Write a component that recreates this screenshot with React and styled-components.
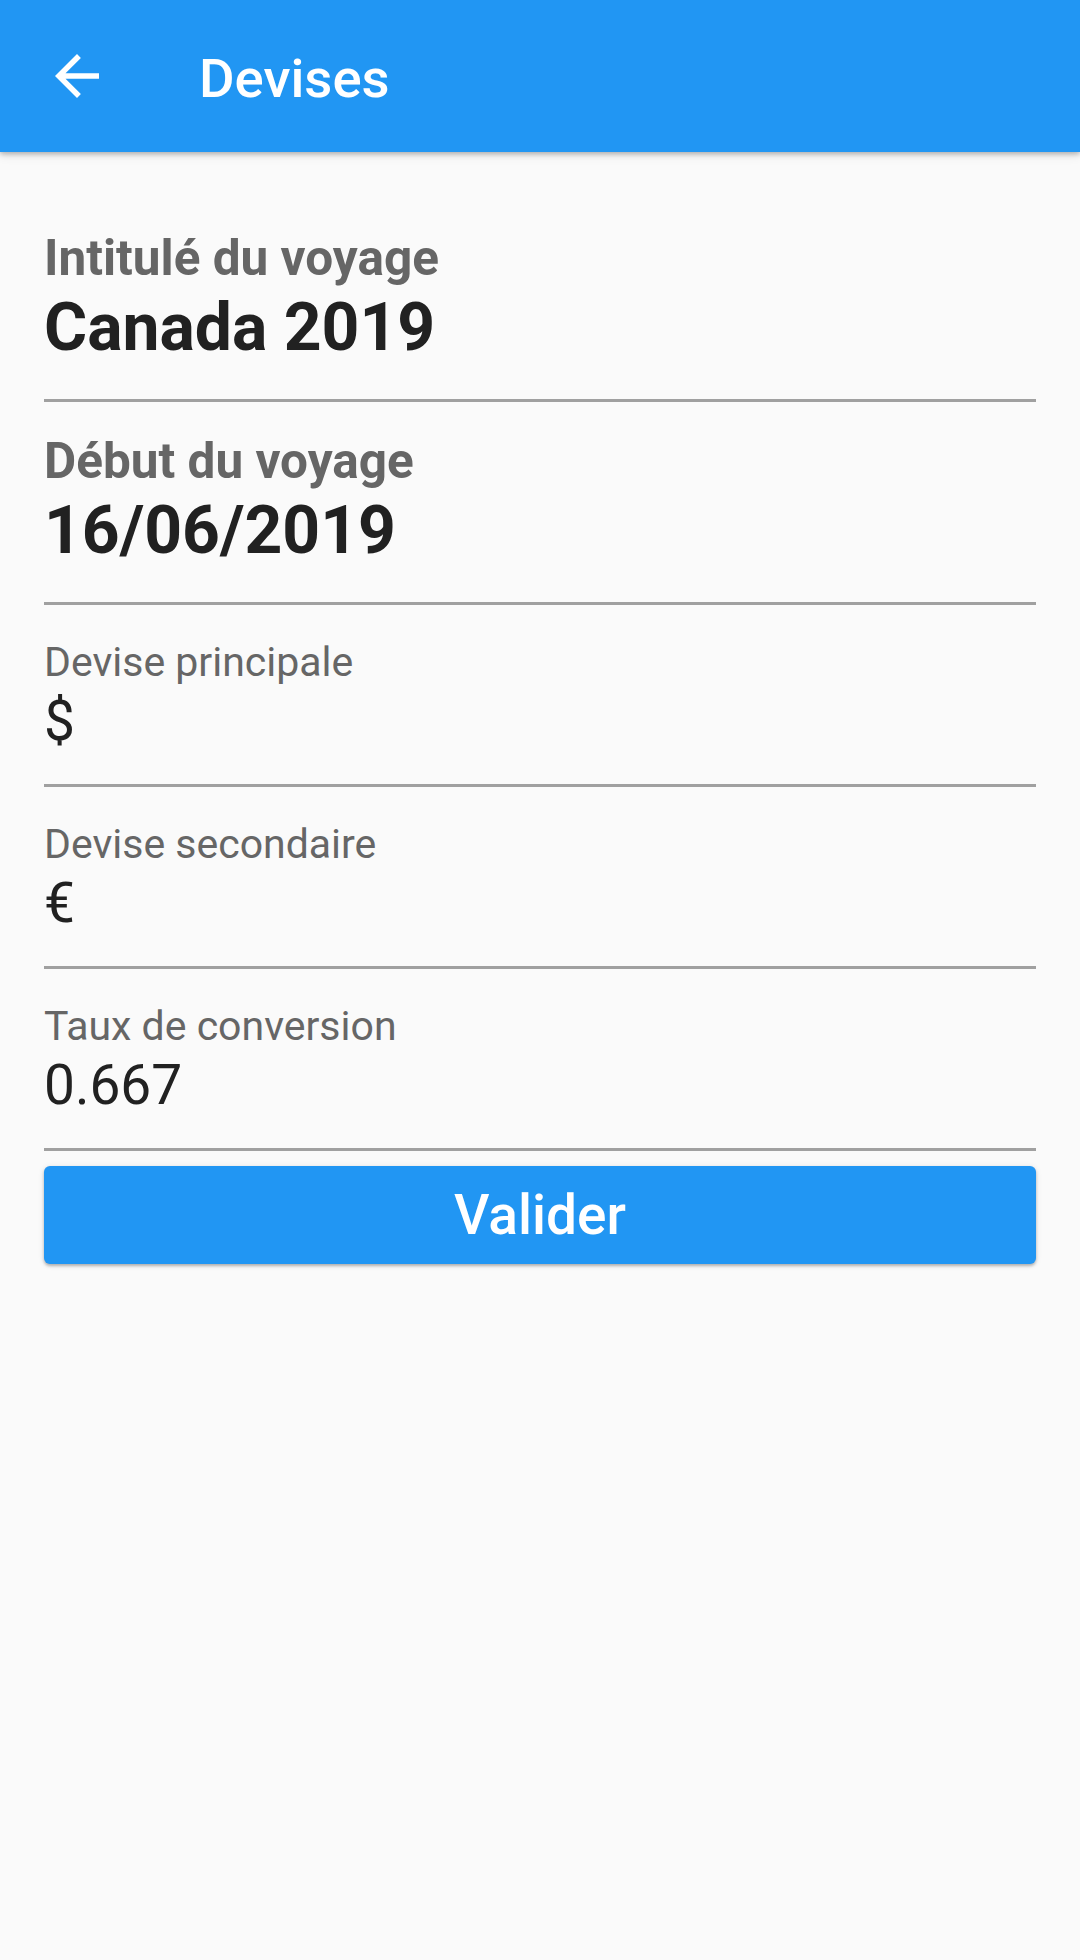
import React from "react";
import styled, { createGlobalStyle } from "styled-components";

const Global = createGlobalStyle`
  html, body { margin: 0; padding: 0; background: #fafafa; }
  body { font-family: Roboto, "Noto Sans", "Liberation Sans", sans-serif; }
  * { box-sizing: border-box; }
`;

const Page = styled.div`
  min-height: 1960px;
  background: #fafafa;
`;

const AppBar = styled.header`
  display: flex;
  align-items: center;
  height: 152px;
  background: #2196f3;
  box-shadow: 0 2px 5px rgba(0, 0, 0, 0.26), 0 4px 10px rgba(0, 0, 0, 0.08);
  position: relative;
  z-index: 1;
`;

const BackButton = styled.button`
  display: flex;
  align-items: center;
  justify-content: center;
  width: 66px;
  height: 66px;
  margin-left: 44px;
  padding: 0;
  border: none;
  background: transparent;
  color: #fff;
`;

const Title = styled.h1`
  margin: 4px 0 0 89px;
  font-size: 54.5px;
  font-weight: 500;
  color: #fff;
  line-height: 1;
`;

const Content = styled.main`
  display: flex;
  flex-direction: column;
  padding: 47px 44px 0 44px;
`;

const Field = styled.div`
  display: flex;
  flex-direction: column;
  padding: ${(p) => (p.$strong ? "30px 0 31px" : "32px 0 29px")};
  border-bottom: 3px solid #a0a0a0;
`;

const Label = styled.div`
  font-size: ${(p) => (p.$strong ? "49.5px" : "41px")};
  line-height: ${(p) => (p.$strong ? "58px" : "51px")};
  font-weight: ${(p) => (p.$strong ? 700 : 400)};
  color: #666666;
`;

const Value = styled.div`
  font-size: ${(p) => (p.$strong ? "66px" : "55px")};
  line-height: ${(p) => (p.$strong ? "80px" : "67px")};
  font-weight: ${(p) => (p.$strong ? 700 : 400)};
  color: #212121;
  margin-top: ${(p) => (p.$strong ? "1px" : "0")};
`;

const SubmitButton = styled.button`
  margin-top: 15px;
  height: 98px;
  border: none;
  border-radius: 6px;
  background: #2196f3;
  color: #fff;
  font-family: inherit;
  font-size: 55px;
  font-weight: 500;
  box-shadow: 0 2px 3px rgba(0, 0, 0, 0.25), 0 1px 6px rgba(0, 0, 0, 0.1);
`;

const ArrowBack = () => (
  <svg width="66" height="66" viewBox="0 0 24 24" fill="currentColor">
    <path d="M20 11H7.83l5.59-5.59L12 4l-8 8 8 8 1.41-1.41L7.83 13H20v-2z" />
  </svg>
);

const fields = [
  { label: "Intitulé du voyage", value: "Canada 2019", strong: true },
  { label: "Début du voyage", value: "16/06/2019", strong: true },
  { label: "Devise principale", value: "$" },
  { label: "Devise secondaire", value: "€" },
  { label: "Taux de conversion", value: "0.667" },
];

export default function App() {
  return (
    <Page>
      <Global />
      <AppBar>
        <BackButton aria-label="Retour">
          <ArrowBack />
        </BackButton>
        <Title>Devises</Title>
      </AppBar>
      <Content>
        {fields.map((f) => (
          <Field key={f.label} $strong={f.strong}>
            <Label $strong={f.strong}>{f.label}</Label>
            <Value $strong={f.strong}>{f.value}</Value>
          </Field>
        ))}
        <SubmitButton>Valider</SubmitButton>
      </Content>
    </Page>
  );
}
